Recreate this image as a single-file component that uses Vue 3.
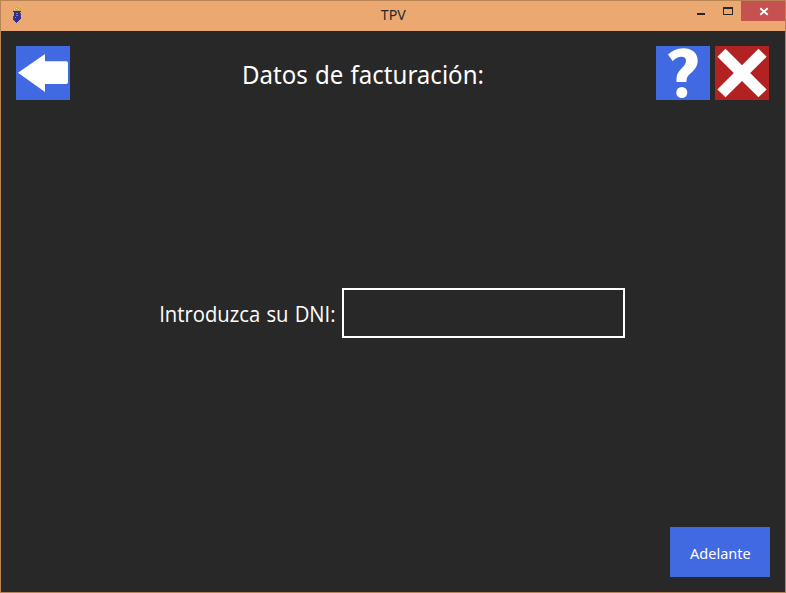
<script setup>
import { ref } from 'vue'

const dni = ref('')
</script>

<template>
  <div class="window">
    <header class="titlebar">
      <svg class="app-icon" viewBox="0 0 10 17" width="10" height="17" shape-rendering="crispEdges">
        <path d="M1 4h8v1H8v5h1v2H8v1H7v1H6v1H5v1H4v-1H3v-1H2v-1H1v-3h1V5H1z" fill="#30308c" />
        <path d="M1 9h1v3H1zM8 6h1v4H8z" fill="#55409a" />
        <path d="M4 6h2v1H4zM3 10h1v1H3z" fill="#8880b0" />
        <path d="M4 8h2v1H4z" fill="#9c7670" />
        <path d="M1 1h1v1h1V1h1V0h2v1h1v1h1V1h1v3H1z" fill="#cbaa48" />
        <path d="M2 2h1v1H2zM4 1h1v1H4zM6 2h1v1H6z" fill="#f6e58e" />
      </svg>
      <span class="caption">TPV</span>
      <div class="controls">
        <svg class="control" viewBox="0 0 27 20" width="27" height="20">
          <path d="M10 12h8v2h-8z" fill="#282828" />
        </svg>
        <svg class="control" viewBox="0 0 27 20" width="27" height="20">
          <path d="M9 6h10v8H9zM10 8v5h8V8z" fill="#282828" fill-rule="evenodd" />
        </svg>
        <svg class="control close" viewBox="0 0 44 20" width="44" height="20">
          <path d="M19.300 7.300l7.400 6.400M26.700 7.300l-7.400 6.400" stroke="#fff" stroke-width="1.9" />
        </svg>
      </div>
    </header>

    <main class="client">
      <div class="top">
        <button class="tile" aria-label="Atrás">
          <svg viewBox="0 0 54 54" width="54" height="54">
            <path d="M2 26.700L29 8v7.300h21.300q1.700 0 1.700 1.700v19.300q0 1.700-1.700 1.700H29v8z" fill="#fff" />
          </svg>
        </button>
        <h1>Datos de facturación:</h1>
        <div class="actions">
          <button class="tile" aria-label="Ayuda">
            <svg viewBox="0 0 54 54" width="54" height="54">
              <path d="M12 8.500C16 4.700 21 2.300 27 2.300C36 2.300 41.700 7 41.700 14.500C41.700 20 39 23.500 35 27C31.500 30 30.500 31.500 30.500 36H20.500C20.300 29.500 21.500 26.500 25.500 22.500C28.500 19.500 30 17.500 30 14.500C30 12 28.500 10.700 25.500 10.700C22 10.700 19 12.200 16.800 15.200z" fill="#fff" />
              <circle cx="25.800" cy="46.500" r="5.500" fill="#fff" />
            </svg>
          </button>
          <button class="tile danger" aria-label="Cancelar">
            <svg viewBox="0 0 54 54" width="54" height="54">
              <path d="M10.500 2.700L27 19.200L43.500 2.700L51.600 10.800L35.200 27L51.600 43.500L43.500 51.300L27 35L10.500 51.300L2.400 43.500L18.800 27L2.400 10.800z" fill="#fff" />
            </svg>
          </button>
        </div>
      </div>

      <div class="field">
        <label for="dni">Introduzca su DNI:</label>
        <input id="dni" v-model="dni" type="text" />
      </div>

      <div class="bottom">
        <button class="next"><span>Adelante</span></button>
      </div>
    </main>
  </div>
</template>

<style>
body {
  background: #282828;
}
</style>

<style scoped>
.window {
  box-sizing: border-box;
  width: 786px;
  height: 593px;
  display: flex;
  flex-direction: column;
  border: 1px solid #b98454;
  background: #282828;
  color: #fff;
  font-family: "Noto Sans", "Open Sans", sans-serif;
  overflow: hidden;
}

.titlebar {
  height: 30px;
  flex: none;
  display: grid;
  grid-template-columns: 1fr auto 1fr;
  align-items: start;
  background: #eba870;
}

.app-icon {
  margin: 6px 0 0 11px;
}

.caption {
  color: #282828;
  font-size: 15px;
  line-height: 27px;
  transform: scaleX(0.94);
}

.controls {
  display: flex;
  justify-content: flex-end;
}

.control {
  display: block;
}

.close {
  background: #c75050;
}

.client {
  flex: 1;
  display: flex;
  flex-direction: column;
  padding: 15px;
}

.top {
  display: flex;
  align-items: center;
  padding-right: 1px;
}

.tile {
  width: 54px;
  height: 54px;
  padding: 0;
  border: 0;
  background: #4169e1;
}

.tile svg {
  display: block;
}

.danger {
  background: #b22222;
}

.actions {
  display: flex;
  gap: 5px;
}

h1 {
  flex: 1;
  margin: 0;
  padding-top: 2px;
  text-align: center;
  font-size: 26px;
  font-weight: 400;
  line-height: 52px;
  white-space: nowrap;
  word-spacing: 1px;
  transform: scaleX(0.925);
}

.field {
  flex: 1;
  display: flex;
  align-items: center;
  justify-content: flex-end;
  padding: 0 145px 2px 0;
  gap: 6px;
}

label {
  font-family: "Open Sans", "Noto Sans", sans-serif;
  font-size: 22px;
  line-height: 50px;
  white-space: nowrap;
  word-spacing: 1px;
  transform: scaleX(0.921);
  transform-origin: right center;
}

input {
  box-sizing: border-box;
  width: 283px;
  height: 50px;
  padding: 0 8px;
  border: 2px solid #fff;
  border-radius: 0;
  outline: 0;
  background: transparent;
  color: #fff;
  font: 22px "Open Sans", sans-serif;
}

.bottom {
  display: flex;
  justify-content: flex-end;
}

.next {
  width: 100px;
  height: 50px;
  padding: 2px 0 0;
  border: 0;
  background: #4169e1;
  color: #fff;
  font: 15px "Noto Sans", sans-serif;
}

.next span {
  display: inline-block;
  transform: scaleX(0.965);
}
</style>
